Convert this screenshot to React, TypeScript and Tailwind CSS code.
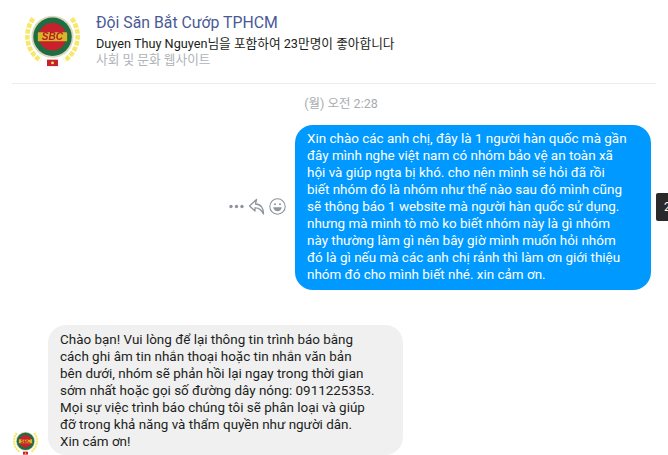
const FONT = "font-['Roboto','Noto_Sans_CJK_KR',sans-serif]";

function Logo({ size }: { size: number }) {
  return (
    <svg width={size} height={size} viewBox="0 0 60 60" className="shrink-0 blur-[0.4px]">
      <g fill="none" stroke="#f6e86a" strokeWidth="5" strokeDasharray="5 1.5">
        <path d="M9 7 C-1 20 0 42 17 53" />
        <path d="M51 7 C61 20 60 42 43 53" />
      </g>
      <circle cx="30" cy="27" r="23" fill="#d9d9c0" />
      <circle cx="30" cy="27" r="21" fill="#1f6d40" />
      <circle cx="30" cy="27" r="15" fill="#c8202c" />
      <rect x="14" y="22" width="32" height="10" rx="1" fill="#d8b52a" />
      <text x="30" y="31" textAnchor="middle" fontSize="11" fontWeight="800" fontStyle="italic" fill="#b81c24" fontFamily="Liberation Sans, sans-serif">SBC</text>
      <rect x="24" y="52" width="12" height="7" fill="#c8202c" />
      <circle cx="30" cy="55.5" r="1.6" fill="#f4e35c" />
    </svg>
  );
}

function Lines({ lines }: { lines: string[] }) {
  return (
    <>
      {lines.map((l) => (
        <div key={l} className="whitespace-nowrap">{l}</div>
      ))}
    </>
  );
}

const blue = [
  "Xin chào các anh chị, đây là 1 người hàn quốc mà gần",
  "đây mình nghe việt nam có nhóm bảo vệ an toàn xã",
  "hội và giúp ngta bị khó. cho nên mình sẽ hỏi đã rồi",
  "biết nhóm đó là nhóm như thế nào sau đó mình cũng",
  "sẽ thông báo 1 website mà người hàn quốc sử dụng.",
  "nhưng mà mình tò mò ko biết nhóm này là gì nhóm",
  "này thường làm gì nên bây giờ mình muốn hỏi nhóm",
  "đó là gì nếu mà các anh chị rảnh thì làm ơn giới thiệu",
  "nhóm đó cho mình biết nhé. xin cảm ơn.",
];
const gray = [
  "Chào bạn! Vui lòng để lại thông tin trình báo bằng",
  "cách ghi âm tin nhắn thoại hoặc tin nhắn văn bản",
  "bên dưới, nhóm sẽ phản hồi lại ngay trong thời gian",
  "sớm nhất hoặc gọi số đường dây nóng: 0911225353.",
  "Mọi sự việc trình báo chúng tôi sẽ phân loại và giúp",
  "đỡ trong khả năng và thẩm quyền như người dân.",
  "Xin cám ơn!",
];

export default function App() {
  return (
    <div className={`w-[668px] h-[455px] overflow-hidden bg-white flex flex-col ${FONT}`}>
      <header className="mx-[12px] h-[84px] shrink-0 border-b border-[#ececec] flex items-start pl-[13px] pt-[12px] gap-[16px]">
        <Logo size={55} />
        <div className="pt-[1px]">
          <div className="text-[15.8px] leading-[20px] text-[#4a5a96]">Đội Săn Bắt Cướp TPHCM</div>
          <div className="text-[12.7px] leading-[17px] mt-[2px] text-[#1c1e21]">Duyen Thuy Nguyen님을 포함하여 23만명이 좋아합니다</div>
          <div className="text-[12.7px] leading-[16px] text-[#b0b3b8]">사회 및 문화 웹사이트</div>
        </div>
      </header>

      <div className="h-[41px] shrink-0 flex items-center justify-center pl-[14px] text-[12.5px] text-[#a8abaf]">(월) 오전 2:28</div>

      <div className="flex items-center justify-end pr-[17px] relative">
        <div className="flex items-center gap-[4px] mr-[9px] mt-[-3px]">
          <svg width="15" height="5" viewBox="0 0 15 5" fill="#8d949e"><circle cx="2" cy="2.5" r="1.7" /><circle cx="7.5" cy="2.5" r="1.7" /><circle cx="13" cy="2.5" r="1.7" /></svg>
          <svg width="17" height="17" viewBox="0 0 17 17" fill="none" stroke="#8d949e" strokeWidth="1.3" strokeLinejoin="round"><path d="M8.5 1.5 L1.5 8 L7 13 L7 10 C11 9.5 13 11.5 15.5 16 C15.5 10.5 13 6 7.5 6 L8.5 1.5 Z" /></svg>
          <svg width="17" height="17" viewBox="0 0 17 17" fill="none" stroke="#8d949e" strokeWidth="1.1"><circle cx="8.5" cy="8.5" r="7.7" /><circle cx="6" cy="6.3" r="1" fill="#8d949e" stroke="none" /><circle cx="11" cy="6.3" r="1" fill="#8d949e" stroke="none" /><path d="M4.3 9.3 H12.7 C12.4 12 10.6 13.3 8.5 13.3 C6.4 13.3 4.6 12 4.3 9.3 Z" fill="#8d949e" stroke="none" /></svg>
        </div>
        <div className="w-[356px] h-[165px] rounded-[18px] bg-[#0099ff] text-white text-[13.45px] leading-[17px] pl-[12px] pt-[5px] overflow-hidden">
          <Lines lines={blue} />
        </div>
        <div className="absolute right-0 top-[68px] w-[12px] h-[28px] bg-[#2a2a2a] rounded-l-[2px] text-white text-[12px] leading-[28px] pl-[8px] overflow-hidden">
          2
          <span className="absolute left-[-4px] top-[10px] w-[8px] h-[8px] rotate-45 bg-[#2a2a2a]" />
        </div>
      </div>

      <div className="flex items-end mt-[35px] pl-[13px] gap-[10px]">
        <Logo size={25} />
        <div className="w-[355px] h-[130px] rounded-[18px] bg-[#f0f0f0] text-[#1c1e21] text-[13.45px] leading-[17px] pl-[12px] pt-[6px] overflow-hidden">
          <Lines lines={gray} />
        </div>
      </div>
    </div>
  );
}
